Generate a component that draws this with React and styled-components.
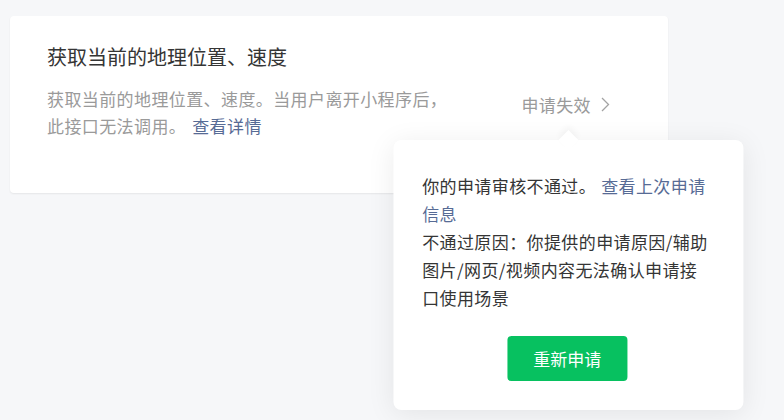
import React from 'react';
import styled, { createGlobalStyle } from 'styled-components';

const GlobalStyle = createGlobalStyle`
  body {
    margin: 0;
    background: #f6f7f9;
    font-family: "Noto Sans CJK SC", "Noto Sans", sans-serif;
    text-spacing-trim: space-all;
  }
`;

const Page = styled.div`
  width: 784px;
  height: 420px;
  padding: 16px 0 0 10px;
  box-sizing: border-box;
  overflow: hidden;
`;

const Card = styled.div`
  display: flex;
  align-items: center;
  justify-content: space-between;
  width: 658px;
  height: 177px;
  box-sizing: border-box;
  padding: 0 58px 0 37px;
  background: #fff;
  border-radius: 4px;
  box-shadow: 0 1px 2px rgba(0, 0, 0, 0.07);
`;

const Info = styled.div`
  align-self: flex-start;
  padding-top: 27px;
`;

const Title = styled.h3`
  margin: 0;
  font-size: 20px;
  font-weight: 400;
  line-height: 28px;
  color: #353535;
`;

const Desc = styled.p`
  margin: 14px 0 0;
  width: 402px;
  font-size: 17px;
  letter-spacing: 0.4px;
  line-height: 27px;
  color: #9a9a9a;
`;

const Link = styled.a`
  margin-left: ${({ gap }) => gap || 5}px;
  color: #576b95;
  text-decoration: none;
  cursor: pointer;
`;

const Status = styled.div`
  position: relative;
  display: flex;
  align-items: center;
  gap: 10px;
  font-size: 17px;
  letter-spacing: 0.4px;
  line-height: 24px;
  color: #9a9a9a;
  cursor: pointer;
`;

const Popover = styled.div`
  position: absolute;
  top: 47px;
  left: 50%;
  transform: translateX(-49.3%);
  width: 350px;
  box-sizing: border-box;
  padding: 32px 31px 29px 29px;
  background: #fff;
  border-radius: 8px;
  box-shadow: 0 4px 28px rgba(0, 0, 0, 0.08);
  cursor: default;

  &::before {
    content: '';
    position: absolute;
    top: -7px;
    left: 50%;
    width: 14px;
    height: 14px;
    background: #fff;
    transform: translateX(-50%) rotate(45deg);
    box-shadow: -3px -3px 6px rgba(0, 0, 0, 0.04);
  }
`;

const PopText = styled.p`
  position: relative;
  margin: 0;
  font-size: 17px;
  line-height: 28px;
  color: #353535;
`;

const Actions = styled.div`
  display: flex;
  justify-content: center;
  margin-top: 24px;
`;

const Button = styled.button`
  width: 120px;
  height: 45px;
  border: 0;
  border-radius: 4px;
  background: #07c160;
  color: #fff;
  font-family: inherit;
  font-size: 17px;
  letter-spacing: 0;
  cursor: pointer;
`;

const Chevron = () => (
  <svg width="9" height="15" viewBox="0 0 9 15" fill="none">
    <path d="M1 1l6.5 6.5L1 14" stroke="#a3a3a3" strokeWidth="1.3" />
  </svg>
);

export default function App() {
  return (
    <Page>
      <GlobalStyle />
      <Card>
        <Info>
          <Title>获取当前的地理位置、速度</Title>
          <Desc>
            获取当前的地理位置、速度。当用户离开小程序后，此接口无法调用。<Link gap={6}>查看详情</Link>
          </Desc>
        </Info>
        <Status>
          申请失效
          <Chevron />
          <Popover>
            <PopText>
              你的申请审核不通过。<Link>查看上次申请信息</Link>
              <br />
              不通过原因：你提供的申请原因/辅助图片/网页/视频内容无法确认申请接口使用场景
            </PopText>
            <Actions>
              <Button>重新申请</Button>
            </Actions>
          </Popover>
        </Status>
      </Card>
    </Page>
  );
}
